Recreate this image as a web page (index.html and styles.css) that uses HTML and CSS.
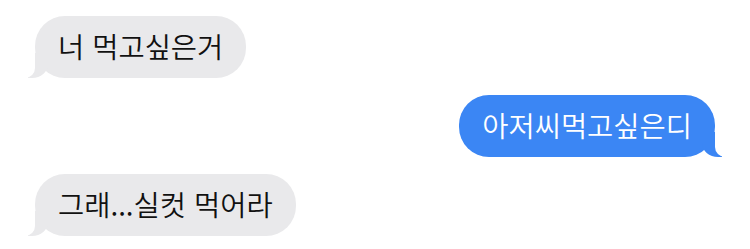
FILE: index.html
```html
<!DOCTYPE html>
<html lang="ko">
  <head>
    <meta charset="UTF-8" />
    <meta name="viewport" content="width=device-width, initial-scale=1.0" />
    <link rel="stylesheet" href="styles.css">
  </head>
  <body>
    <div class="thread">
      <div class="bubble them">너 먹고싶은거</div>
      <div class="bubble me">아저씨먹고싶은디</div>
      <div class="bubble them">그래...실컷 먹어라</div>
    </div>
  </body>
</html>
```
FILE: styles.css
```css
body {
  margin: 0;
  background: #fff;
  font-family: "Noto Sans CJK KR", "Noto Sans", sans-serif;
}

.thread {
  display: flex;
  flex-direction: column;
  align-items: flex-start;
  gap: 17px;
  padding: 16px 35px 0 35px;
}

.bubble {
  position: relative;
  padding: 12px 23px 14px;
  font-size: 28.5px;
  font-weight: 350;
  line-height: 36px;
  border-radius: 30px;
  white-space: nowrap;
}

.bubble::before,
.bubble::after {
  content: "";
  position: absolute;
  bottom: 0;
  height: 25px;
}

.them {
  background: #e9e9eb;
  color: #111;
}

.them::before {
  left: -7px;
  width: 20px;
  background: #e9e9eb;
  border-bottom-right-radius: 16px 14px;
}

.them::after {
  left: -26px;
  width: 26px;
  background: #fff;
  border-bottom-right-radius: 10px;
}

.me {
  align-self: flex-end;
  background: #3b86f4;
  color: #fff;
}

.me::before {
  right: -7px;
  width: 20px;
  background: #3b86f4;
  border-bottom-left-radius: 16px 14px;
}

.me::after {
  right: -26px;
  width: 26px;
  background: #fff;
  border-bottom-left-radius: 10px;
}
```
